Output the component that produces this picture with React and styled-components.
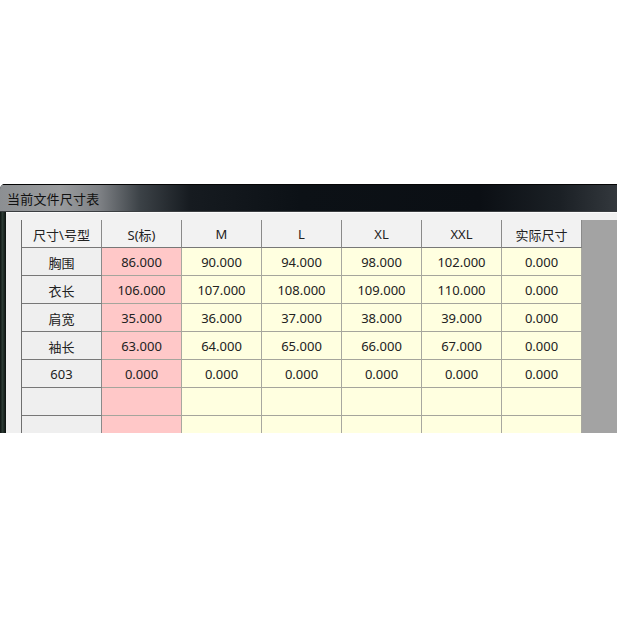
import React from "react";
import styled, { createGlobalStyle } from "styled-components";

const sizes = ["S(标)", "M", "L", "XL", "XXL", "实际尺寸"];

const rows = [
  { name: "胸围", values: ["86.000", "90.000", "94.000", "98.000", "102.000", "0.000"] },
  { name: "衣长", values: ["106.000", "107.000", "108.000", "109.000", "110.000", "0.000"] },
  { name: "肩宽", values: ["35.000", "36.000", "37.000", "38.000", "39.000", "0.000"] },
  { name: "袖长", values: ["63.000", "64.000", "65.000", "66.000", "67.000", "0.000"] },
  { name: "603", values: ["0.000", "0.000", "0.000", "0.000", "0.000", "0.000"] },
  { name: "", values: ["", "", "", "", "", ""] },
  { name: "", values: ["", "", "", "", "", ""] },
];

const GlobalStyle = createGlobalStyle`
  body {
    margin: 0;
    background: #ffffff;
    font-family: "Noto Sans", "Noto Sans CJK SC", sans-serif;
  }
`;

const Page = styled.div`
  width: 617px;
  height: 617px;
  padding-top: 184px;
  box-sizing: border-box;
  overflow: hidden;
`;

const Window = styled.div`
  height: 249px;
  display: flex;
  flex-direction: column;
  overflow: hidden;
  border-top-left-radius: 5px;
  background: #0b0f12;
`;

const TitleBar = styled.div`
  height: 28px;
  flex: none;
  display: flex;
  align-items: center;
  padding-left: 7px;
  border-top: 1px solid #050505;
  border-bottom: 1px solid #3a3d40;
  box-sizing: border-box;
  background: linear-gradient(
    90deg,
    #8c8f92 0px,
    #9a9c9e 60px,
    #7d8084 100px,
    #3c4247 140px,
    #161b20 190px,
    #0c1116 300px,
    #0b0f14 480px,
    #1b2025 560px,
    #33383d 617px
  );
  font-size: 13px;
  color: #111;
  letter-spacing: 0.2px;
`;

const Client = styled.div`
  flex: 1;
  display: flex;
  min-height: 0;
`;

const Frame = styled.div`
  width: 6px;
  flex: none;
  background: linear-gradient(90deg, #0c1210, #2c3b34 40%, #0a0f0d);
`;

const Body = styled.div`
  flex: 1;
  display: flex;
  background: #f0f0f0;
  border-top: 1px solid #fbfbfb;
  padding: 7px 0 0 15px;
  min-width: 0;
`;

const GridArea = styled.div`
  flex: 1;
  background: #a3a3a3;
  overflow: hidden;
`;

const Grid = styled.div`
  display: grid;
  grid-template-columns: repeat(7, 80px);
  grid-auto-rows: 28px;
  width: 560px;
  border-left: 1px solid #6f6f6f;
  box-sizing: border-box;
`;

const fills = {
  head: "#f2f2f2",
  side: "#efefef",
  pink: "#ffc8c8",
  yellow: "#ffffe0",
};

const Cell = styled.div`
  display: flex;
  align-items: center;
  justify-content: center;
  padding-top: 1px;
  box-sizing: border-box;
  background: ${(p) => fills[p.$fill]};
  border-right: 1px solid ${(p) => (p.$fill === "side" || p.$fill === "head" ? "#8a8a8a" : "#a8a8a0")};
  border-bottom: 1px solid ${(p) => (p.$fill === "side" || p.$fill === "head" ? "#777" : "#a5a59c")};
  font-size: 13px;
  color: #222;
  white-space: nowrap;
`;

export default function App() {
  return (
    <Page>
      <GlobalStyle />
      <Window>
        <TitleBar>当前文件尺寸表</TitleBar>
        <Client>
          <Frame />
          <Body>
            <GridArea>
              <Grid>
                <Cell $fill="head">尺寸\号型</Cell>
                {sizes.map((s) => (
                  <Cell key={s} $fill="head">
                    {s}
                  </Cell>
                ))}
                {rows.map((r, i) => (
                  <React.Fragment key={i}>
                    <Cell $fill="side">{r.name}</Cell>
                    {r.values.map((v, j) => (
                      <Cell key={j} $fill={j === 0 ? "pink" : "yellow"}>
                        {v}
                      </Cell>
                    ))}
                  </React.Fragment>
                ))}
              </Grid>
            </GridArea>
          </Body>
        </Client>
      </Window>
    </Page>
  );
}
